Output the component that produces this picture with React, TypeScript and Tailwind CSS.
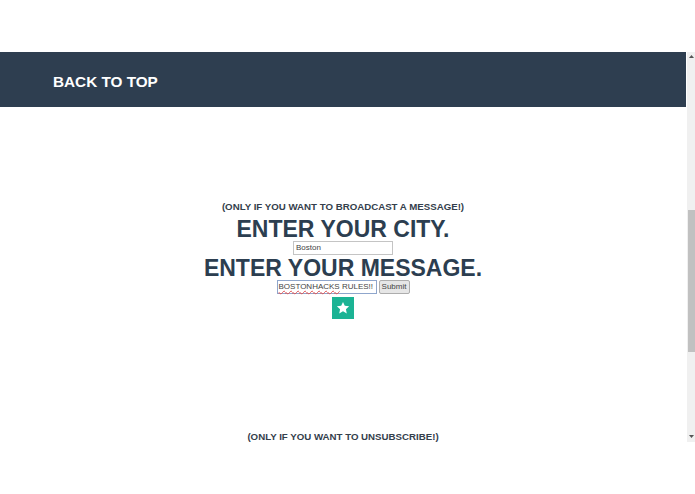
import React from "react";

export default function App() {
  return (
    <div className="w-[695px] h-[494px] bg-white pt-[52px] overflow-hidden" style={{ fontFamily: '"Liberation Sans", Arial, sans-serif' }}>
      <div className="flex">
        <div className="w-[686px] flex flex-col">
          <div className="h-[55px] bg-[#2e3e50] pt-[21px] pl-[53px]">
            <div className="text-[15.3px] leading-[18px] font-bold text-white">BACK TO TOP</div>
          </div>
          <div className="flex flex-col items-center text-[#2c3e50] font-bold">
            <div className="mt-[94px] text-[9.7px] leading-[12px] text-[#34404c]">(ONLY IF YOU WANT TO BROADCAST A MESSAGE!)</div>
            <div className="mt-[5px] text-[23px] leading-[23px]">ENTER YOUR CITY.</div>
            <div className="w-[100px] h-[14px] border border-[#c4c4c4] bg-white flex items-center px-[2px] text-[8px] font-normal text-[#444]">Boston</div>
            <div className="mt-[2px] text-[23px] leading-[23px]">ENTER YOUR MESSAGE.</div>
            <div className="flex gap-[2px] items-center">
              <div className="w-[100px] h-[14px] border border-[#8fa6cc] bg-white flex items-center px-[1px] text-[8px] font-normal text-[#444] whitespace-nowrap">
                <span className="underline decoration-wavy decoration-[#e05050] decoration-[0.5px] underline-offset-[1px]">BOSTONHACKS</span>
                <span>&nbsp;RULES!!</span>
              </div>
              <div className="w-[31px] h-[14px] border border-[#adadad] rounded-[2px] bg-[#e6e6e6] flex items-center justify-center text-[8px] font-normal text-[#444]">Submit</div>
            </div>
            <div className="mt-[3px] w-[22px] h-[22px] bg-[#1bb394] flex items-center justify-center">
              <svg width="14" height="14" viewBox="0 0 24 24">
                <polygon points="12,1.5 15.1,8.3 22.5,9.1 17,14.1 18.5,21.4 12,17.7 5.5,21.4 7,14.1 1.5,9.1 8.9,8.3" fill="white" />
              </svg>
            </div>
            <div className="mt-[112px] text-[9.7px] leading-[12px] text-[#34404c]">(ONLY IF YOU WANT TO UNSUBSCRIBE!)</div>
          </div>
        </div>
        <div className="ml-[1px] w-[8px] h-[390px] bg-[#f0f0f0] flex flex-col items-center">
          <svg width="5" height="4" viewBox="0 0 5 4" className="mt-[3px]">
            <polygon points="2.5,0 5,3 0,3" fill="#555" />
          </svg>
          <div className="mt-[151px] w-[7px] h-[142px] bg-[#c1c1c1]" />
          <div className="flex-1" />
          <svg width="5" height="4" viewBox="0 0 5 4" className="mb-[3px]">
            <polygon points="0,0 5,0 2.5,3" fill="#555" />
          </svg>
        </div>
      </div>
    </div>
  );
}
